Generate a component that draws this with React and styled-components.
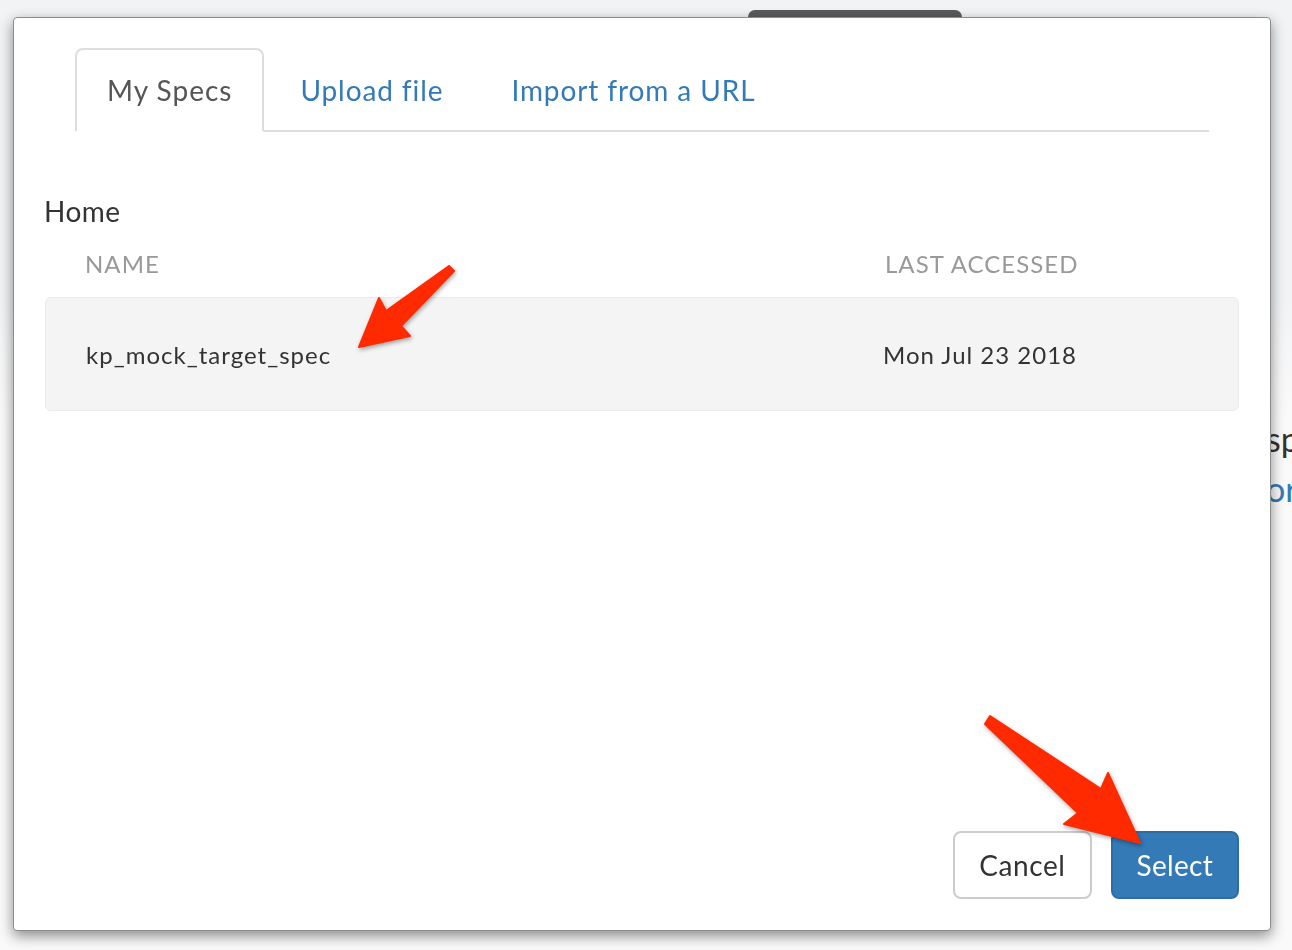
import React from 'react'
import styled, { createGlobalStyle } from 'styled-components'

const GlobalStyle = createGlobalStyle`
  html, body {
    margin: 0;
    padding: 0;
    background: #f2f3f5;
    font-family: Lato, "Open Sans", "Liberation Sans", sans-serif;
    overflow: hidden;
  }
`

const Page = styled.div`
  width: 1292px;
  height: 950px;
  display: flex;
  flex-direction: column;
  overflow: hidden;
  background: linear-gradient(#f2f3f5 0, #f2f3f5 300px, #fafafa 420px);
`

const BackTab = styled.div`
  margin: 10px 0 0 748px;
  width: 214px;
  height: 14px;
  background: #5b5b5b;
  border-radius: 7px 7px 0 0;
`

const BackText = styled.div`
  margin: 390px 0 0 1266px;
  width: 26px;
  overflow: hidden;
  white-space: nowrap;
  font-size: 34px;
  line-height: 50px;
  color: #333;
`

const BackLink = styled.div`
  color: #337ab7;
`

const Modal = styled.div`
  position: fixed;
  top: 17px;
  left: 13px;
  width: 1258px;
  height: 914px;
  box-sizing: border-box;
  background: #fff;
  border: 1px solid #8c8c8c;
  border-radius: 4px;
  box-shadow: 0 5px 14px rgba(0, 0, 0, 0.45);
  padding: 30px 31px 31px 31px;
  display: flex;
  flex-direction: column;
`

const Tabs = styled.ul`
  list-style: none;
  margin: 0 30px;
  padding: 0;
  display: flex;
  border-bottom: 2px solid #ddd;
`

const Tab = styled.li`
  margin-right: 4px;
  margin-bottom: -2px;
  padding: 20px 30px;
  font-size: 28px;
  line-height: 40px;
  border: 2px solid ${({ active }) => (active ? '#ddd' : 'transparent')};
  border-bottom-color: ${({ active }) => (active ? '#fff' : 'transparent')};
  border-radius: 8px 8px 0 0;
  color: ${({ active }) => (active ? '#555' : '#337ab7')};
  background: ${({ active }) => (active ? '#fff' : 'transparent')};
  letter-spacing: ${({ active }) => (active ? '1px' : '0.9px')};
`

const Folder = styled.h4`
  margin: 59px 0 0 -1px;
  font-size: 28px;
  line-height: 40px;
  font-weight: 400;
  color: #333;
  letter-spacing: 0.5px;
`

const Grid = styled.div`
  display: grid;
  grid-template-columns: 1fr 315px;
  padding: 0 40px;
`

const HeadRow = styled(Grid)`
  margin-top: 16px;
  padding-bottom: 16px;
  font-size: 24px;
  line-height: 34px;
  color: #999;
  text-transform: uppercase;
  letter-spacing: 1.05px;

  span + span {
    margin-left: 1px;
  }
`

const SpecRow = styled(Grid)`
  height: 114px;
  box-sizing: border-box;
  align-items: center;
  background: #f4f4f4;
  border: 1px solid #ebebeb;
  border-radius: 6px;
  font-size: 24px;
  color: #333;
  letter-spacing: 1px;
`

const Footer = styled.div`
  margin-top: auto;
  display: flex;
  justify-content: flex-end;
  gap: 19px;
`

const Button = styled.button`
  font-family: inherit;
  font-size: 28px;
  line-height: 40px;
  padding: 12px 24px;
  border-radius: 8px;
  border: 2px solid ${({ primary }) => (primary ? '#2e6da4' : '#ccc')};
  background: ${({ primary }) => (primary ? '#337ab7' : '#fff')};
  color: ${({ primary }) => (primary ? '#fff' : '#333')};
  letter-spacing: ${({ primary }) => (primary ? '0.3px' : '0.6px')};
`

const Annotations = styled.svg`
  position: fixed;
  top: 0;
  left: 0;
  width: 1292px;
  height: 950px;
  pointer-events: none;
  filter: drop-shadow(1px 2px 2px rgba(0, 0, 0, 0.35));
`

const arrows = [
  '359,347 379,298 386,311 449,266 454,271 401,326 410,336',
  '1140,843 1108,773 1101,789 990,716 985,724 1078,813 1064,824',
]

export default function App() {
  return (
    <>
      <GlobalStyle />
      <Page>
        <BackTab />
        <BackText>
          sp
          <BackLink>or</BackLink>
        </BackText>
      </Page>

      <Modal>
        <Tabs>
          <Tab active>My Specs</Tab>
          <Tab>Upload file</Tab>
          <Tab>Import from a URL</Tab>
        </Tabs>

        <Folder>Home</Folder>
        <HeadRow>
          <span>Name</span>
          <span>Last accessed</span>
        </HeadRow>
        <SpecRow>
          <span>kp_mock_target_spec</span>
          <span>Mon Jul 23 2018</span>
        </SpecRow>

        <Footer>
          <Button>Cancel</Button>
          <Button primary>Select</Button>
        </Footer>
      </Modal>

      <Annotations viewBox="0 0 1292 950">
        {arrows.map((pts) => (
          <polygon key={pts} points={pts} fill="#ff2a00" stroke="#ff2a00" strokeWidth="2" strokeLinejoin="round" />
        ))}
      </Annotations>
    </>
  )
}
